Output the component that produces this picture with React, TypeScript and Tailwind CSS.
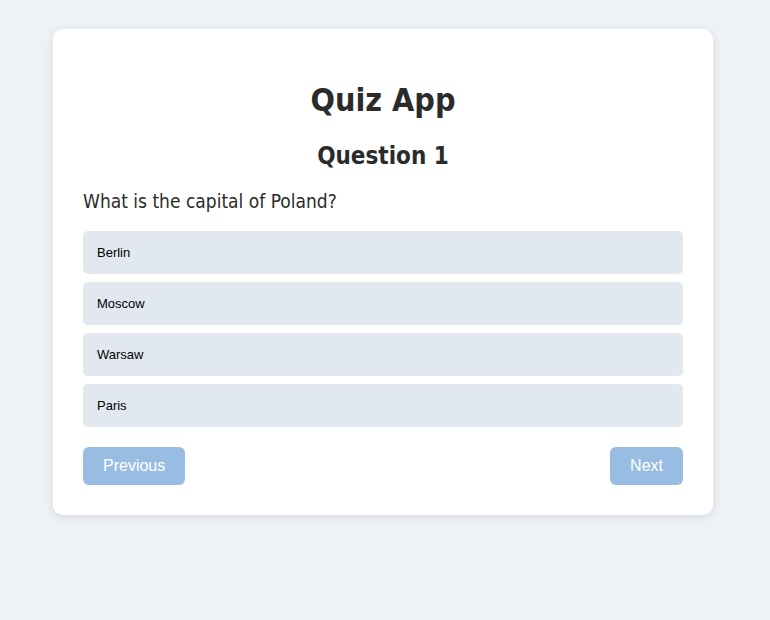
import { useState } from 'react';

const QUESTIONS = [
  { q: 'What is the capital of Poland?', options: ['Berlin', 'Moscow', 'Warsaw', 'Paris'] },
];

const headFont = "font-['Tahoma','DejaVu_Sans_Condensed','DejaVu_Sans',sans-serif]";

export default function App() {
  const [idx] = useState(0);
  const [picked, setPicked] = useState<string | null>(null);
  const item = QUESTIONS[idx];

  return (
    <div className="min-h-screen bg-[#eef1f6] pt-[29px] pr-[4px]">
      <div className="mx-auto w-[660px] rounded-[10px] bg-white px-[30px] pt-[30px] pb-[30px] shadow-[0_2px_10px_rgba(0,0,0,0.1)]">
        <h1 className={`${headFont} mt-[23px] text-center text-[32px] leading-[37px] font-bold text-[#2b2b2b]`}>
          Quiz App
        </h1>
        <h2 className={`${headFont} mt-[23px] text-center text-[24px] leading-[28px] font-bold text-[#2b2b2b]`}>
          Question {idx + 1}
        </h2>
        <p className={`${headFont} mt-[20px] mb-[19px] text-[19px] leading-[22px] text-[#2b2b2b]`}>{item.q}</p>
        <div className="flex flex-col gap-[8px]">
          {item.options.map((o) => (
            <button
              key={o}
              onClick={() => setPicked(o)}
              className={`h-[43px] w-full rounded-[5px] px-[14px] text-left font-['Liberation_Sans',Arial,sans-serif] text-[13px] text-black ${
                picked === o ? 'bg-[#cbd5e1]' : 'bg-[#e2e8f0]'
              }`}
            >
              {o}
            </button>
          ))}
        </div>
        <div className="mt-[20px] flex justify-between">
          <button className="h-[38px] rounded-[6px] bg-[#99bde2] px-[20px] font-['Liberation_Sans',Arial,sans-serif] text-[16px] text-white">
            Previous
          </button>
          <button className="h-[38px] rounded-[6px] bg-[#99bde2] px-[20px] font-['Liberation_Sans',Arial,sans-serif] text-[16px] text-white">
            Next
          </button>
        </div>
      </div>
    </div>
  );
}
